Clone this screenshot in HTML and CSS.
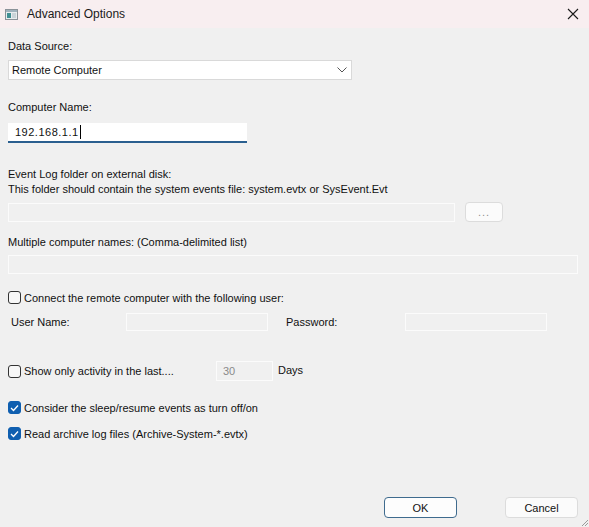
FILE: index.html
```html
<!DOCTYPE html>
<html>
<head>
<meta charset="utf-8">
<link rel="stylesheet" href="styles.css">
</head>
<body>
<div class="window">
  <div class="titlebar">
    <svg class="appicon" width="13" height="11" viewBox="0 0 13 11">
      <rect x="0.5" y="0.5" width="12" height="10" fill="#e8ecee" stroke="#8a9298"/>
      <rect x="1" y="1" width="11" height="2" fill="#9fb2bd"/>
      <rect x="2" y="4" width="4" height="5" fill="#3f8f93"/>
      <rect x="7" y="4" width="4" height="5" fill="#c9d3d8"/>
    </svg>
    <span class="title">Advanced Options</span>
    <svg class="close" width="12" height="12" viewBox="0 0 12 12">
      <path d="M1 1 L11 11 M11 1 L1 11" stroke="#1a1a1a" stroke-width="1.1" fill="none"/>
    </svg>
  </div>
  <div class="content">
    <div class="label l-ds">Data Source:</div>
    <div class="select">
      <span>Remote Computer</span>
      <svg width="10" height="6" viewBox="0 0 10 6"><path d="M0.5 0.5 L5 5 L9.5 0.5" stroke="#555" stroke-width="1" fill="none"/></svg>
    </div>

    <div class="label l-cn">Computer Name:</div>
    <div class="textbox active"><span>192.168.1.1</span><i class="caret"></i></div>

    <div class="label l-ev">Event Log folder on external disk:</div>
    <div class="label l-ev2">This folder should contain the system events file: system.evtx or SysEvent.Evt</div>
    <div class="row r-folder">
      <div class="disabled folder"></div>
      <div class="btn dots">...</div>
    </div>

    <div class="label l-mc">Multiple computer names: (Comma-delimited list)</div>
    <div class="disabled multi"></div>

    <div class="check c-conn"><span class="box"></span><span>Connect the remote computer with the following user:</span></div>
    <div class="row r-user">
      <span class="ulabel">User Name:</span>
      <div class="disabled cred"></div>
      <span class="plabel">Password:</span>
      <div class="disabled cred"></div>
    </div>

    <div class="row r-days">
      <div class="check c-days"><span class="box"></span><span>Show only activity in the last....</span></div>
      <div class="disabled days">30</div>
      <span class="dlabel">Days</span>
    </div>

    <div class="check c-sleep"><span class="box on"><svg width="9" height="8" viewBox="0 0 9 8"><path d="M1 4 L3.5 6.5 L8 1.5" stroke="#fff" stroke-width="1.3" fill="none"/></svg></span><span>Consider the sleep/resume events as turn off/on</span></div>
    <div class="check c-arch"><span class="box on"><svg width="9" height="8" viewBox="0 0 9 8"><path d="M1 4 L3.5 6.5 L8 1.5" stroke="#fff" stroke-width="1.3" fill="none"/></svg></span><span>Read archive log files (Archive-System-*.evtx)</span></div>

    <div class="buttons">
      <div class="btn ok">OK</div>
      <div class="btn cancel">Cancel</div>
    </div>
  </div>
  <svg class="grip" width="10" height="10" viewBox="0 0 10 10">
    <path d="M9 3 L3 9 M9 6 L6 9" stroke="#9a9a9a" stroke-width="1"/>
  </svg>
</div>
</body>
</html>
```
FILE: styles.css
```css
html, body {
  margin: 0;
  padding: 0;
}
body {
  width: 589px;
  height: 527px;
  overflow: hidden;
  font-family: "Liberation Sans", Arial, sans-serif;
  font-size: 11px;
  color: #111;
  background: #f0f0f0;
}
.window {
  position: relative;
  width: 589px;
  height: 527px;
  background: #f0f0f0;
}
.titlebar {
  height: 28px;
  background: #f8eef0;
  display: flex;
  align-items: center;
  padding-left: 5px;
  box-sizing: border-box;
}
.appicon { margin-right: 9px; }
.title { font-size: 12px; color: #1a1a1a; flex: 1; }
.close { margin-right: 10px; }
.content {
  padding: 0 11px 0 8px;
  display: flex;
  flex-direction: column;
}
.label { line-height: 15px; height: 15px; white-space: nowrap; }
.l-ds { margin-top: 11px; }
.select {
  margin-top: 6px;
  width: 344px;
  height: 20px;
  box-sizing: border-box;
  background: #fff;
  border: 1px solid #d9d9d9;
  display: flex;
  align-items: center;
  justify-content: space-between;
  padding: 0 4px 0 3px;
}
.l-cn { margin-top: 20px; }
.textbox {
  margin-top: 8px;
  width: 239px;
  height: 20px;
  box-sizing: border-box;
  background: #fff;
  border-bottom: 2px solid #2a5f8f;
  display: flex;
  align-items: center;
  padding-left: 7px;
  letter-spacing: 0.5px;
}
.caret { display: inline-block; width: 1px; height: 14px; background: #000; margin-left: 1px; }
.l-ev { margin-top: 24px; }
.row { display: flex; align-items: center; }
.r-folder { margin-top: 5px; height: 20px; }
.disabled {
  box-sizing: border-box;
  height: 19px;
  border: 1px solid #fbfbfb;
  background: #f0f0f0;
}
.folder { width: 447px; }
.btn {
  box-sizing: border-box;
  border: 1px solid #dcdcdc;
  background: #fbfbfb;
  border-radius: 4px;
  display: flex;
  align-items: center;
  justify-content: center;
}
.dots { margin-left: 10px; width: 38px; height: 20px; color: #8f8f8f; font-size: 11px; letter-spacing: 1px; }
.l-mc { margin-top: 13px; }
.multi { margin-top: 5px; width: 570px; }
.check { display: flex; align-items: center; height: 15px; white-space: nowrap; }
.box {
  box-sizing: border-box;
  width: 13px;
  height: 13px;
  border: 1px solid #333;
  border-radius: 3px;
  margin-right: 3px;
  background: #f7f7f7;
  display: flex;
  align-items: center;
  justify-content: center;
  flex: none;
}
.box.on { background: #0f5fb0; border-color: #0f5fb0; }
.c-conn { margin-top: 16px; }
.r-user { margin-top: 8px; height: 18px; }
.ulabel { margin-left: 3px; width: 115px; }
.cred { width: 142px; height: 18px; }
.plabel { margin-left: 18px; width: 119px; }
.r-days { margin-top: 30px; height: 20px; }
.c-days { width: 208px; }
.days { width: 57px; height: 20px; color: #8a8a8a; padding-left: 6px; line-height: 18px; }
.dlabel { margin-left: 5px; margin-top: -2px; }
.c-sleep { margin-top: 19px; }
.c-arch { margin-top: 11px; }
.buttons {
  margin-top: 56px;
  display: flex;
  justify-content: flex-end;
}
.ok, .cancel { width: 73px; height: 21px; }
.ok { border-color: #3f6b8e; background: #fdfdfd; }
.cancel { margin-left: 48px; }
.grip { position: absolute; right: 0; bottom: 0; }
```
